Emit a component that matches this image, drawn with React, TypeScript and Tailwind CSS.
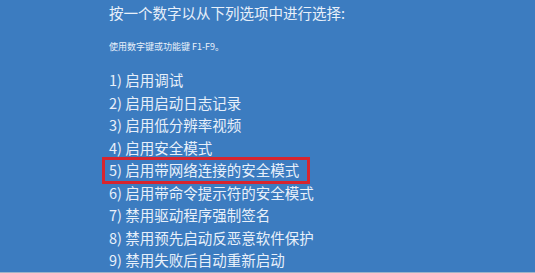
const items = [
  "1) 启用调试",
  "2) 启用启动日志记录",
  "3) 启用低分辨率视频",
  "4) 启用安全模式",
  "5) 启用带网络连接的安全模式",
  "6) 启用带命令提示符的安全模式",
  "7) 禁用驱动程序强制签名",
  "8) 禁用预先启动反恶意软件保护",
  "9) 禁用失败后自动重新启动",
];

export default function App() {
  return (
    <div className="flex h-[273px] w-[535px] flex-col overflow-hidden bg-[#3c7cc0] font-['Noto_Sans_CJK_SC','Noto_Sans',sans-serif] text-[#e8f0fa]">
      <div className="flex flex-1 flex-col pl-[109px]">
        <h1 className="mt-[4px] text-[14.5px] leading-[18px]">按一个数字以从下列选项中进行选择:</h1>
        <p className="mt-[19px] text-[9px] leading-[12px]">使用数字键或功能键 F1-F9。</p>
        <ul className="mt-[16px] flex flex-col">
          {items.map((item, i) => (
            <li key={item} className="flex h-[22.5px] items-center">
              <span
                className={
                  i === 4
                    ? "-ml-[7px] flex h-[27px] items-center border-[3px] border-[#d8252e] pl-[4px] pr-[8px] text-[14.5px]"
                    : "text-[14.5px]"
                }
              >
                {item}
              </span>
            </li>
          ))}
        </ul>
      </div>
      <div className="h-[3px] border-t border-[#9fb4c8] bg-[#dfe3e8]" />
    </div>
  );
}
